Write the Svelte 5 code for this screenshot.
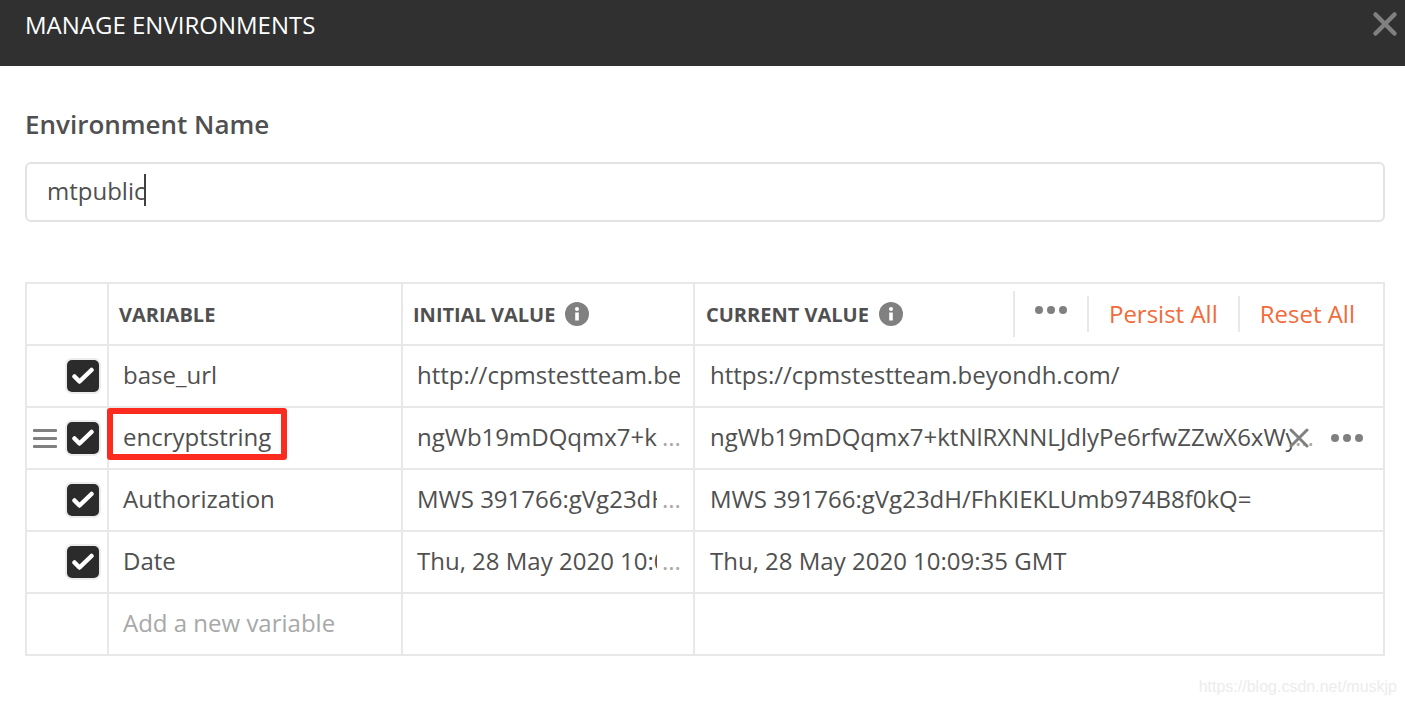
<script lang="ts">
	const rows = [
		{
			name: 'base_url',
			initial: 'http://cpmstestteam.beyondh.com/',
			initialMore: false,
			current: 'https://cpmstestteam.beyondh.com/',
			active: false
		},
		{
			name: 'encryptstring',
			initial: 'ngWb19mDQqmx7+ktNlRXNNLJdlyPe6rfwZZwX6xWy',
			initialMore: true,
			current: 'ngWb19mDQqmx7+ktNlRXNNLJdlyPe6rfwZZwX6xWyJ3kQ0pL',
			active: true
		},
		{
			name: 'Authorization',
			initial: 'MWS 391766:gVg23dH/FhKIEKLUmb974B8f0kQ=',
			initialMore: true,
			current: 'MWS 391766:gVg23dH/FhKIEKLUmb974B8f0kQ=',
			active: false
		},
		{
			name: 'Date',
			initial: 'Thu, 28 May 2020 10:09:35 GMT',
			initialMore: true,
			current: 'Thu, 28 May 2020 10:09:35 GMT',
			active: false
		}
	];
</script>

{#snippet info()}
	<svg class="info" width="24" height="24" viewBox="0 0 24 24">
		<circle cx="12" cy="12" r="12" fill="#808080" />
		<circle cx="12" cy="7" r="2" fill="#fff" />
		<rect x="10.2" y="10.5" width="3.6" height="8" fill="#fff" />
	</svg>
{/snippet}

<div class="page">
	<header>
		<h1>MANAGE ENVIRONMENTS</h1>
		<svg class="close" width="28" height="28" viewBox="0 0 28 28">
			<path d="M4.5 4.5 L23.5 23.5 M23.5 4.5 L4.5 23.5" />
		</svg>
	</header>

	<main>
		<label for="env-name">Environment Name</label>
		<div class="field" id="env-name">
			<span>mtpublic</span><i class="caret"></i>
		</div>

		<div class="table">
			<div class="cell"></div>
			<div class="cell head first">VARIABLE</div>
			<div class="cell head">
				INITIAL VALUE
				{@render info()}
			</div>
			<div class="cell head current">
				CURRENT VALUE
				{@render info()}
				<div class="actions">
					<div class="action dots-action">
						<span class="dots"><b></b><b></b><b></b></span>
					</div>
					<div class="action link">Persist All</div>
					<div class="action link">Reset All</div>
				</div>
			</div>

			{#each rows as row}
				<div class="cell check-cell">
					{#if row.active}
						<span class="handle"><b></b><b></b><b></b></span>
					{/if}
					<span class="check">
						<svg width="22" height="18" viewBox="0 0 22 18">
							<path d="M2.5 9.5 L7.5 14.5 L19.5 3" />
						</svg>
					</span>
				</div>
				<div class="cell value name">
					<span>{row.name}</span>
					{#if row.active}
						<div class="highlight"></div>
					{/if}
				</div>
				<div class="cell value initial">
					<span class="clip">{row.initial}</span>
					{#if row.initialMore}
						<span class="more">...</span>
					{/if}
				</div>
				<div class="cell value current-value">
					<span class="clip" class:short={row.active}>{row.current}</span>
					{#if row.active}
						<span class="more under">...</span>
						<svg class="remove" width="20" height="20" viewBox="0 0 20 20">
							<path d="M2 2 L18 18 M18 2 L2 18" />
						</svg>
						<span class="dots row-dots"><b></b><b></b><b></b></span>
					{/if}
				</div>
			{/each}

			<div class="cell"></div>
			<div class="cell value name placeholder">Add a new variable</div>
			<div class="cell"></div>
			<div class="cell"></div>
		</div>
	</main>

	<div class="watermark">https://blog.csdn.net/muskjp</div>
</div>

<style>
	:global(body) {
		margin: 0;
		background: #fff;
	}

	.page {
		position: relative;
		width: 1405px;
		height: 706px;
		overflow: hidden;
		font-family: 'Open Sans', sans-serif;
		color: #505050;
	}

	header {
		height: 66px;
		background: #303030;
		display: flex;
		align-items: flex-start;
		justify-content: space-between;
		padding: 0 6px 0 25px;
		box-sizing: border-box;
	}

	h1 {
		margin: 7px 0 0;
		font-size: 24px;
		line-height: 36px;
		font-weight: 400;
		color: #fff;
	}

	.close {
		margin-top: 10px;
	}

	.close path {
		fill: none;
		stroke: #808080;
		stroke-width: 4.5;
		stroke-linecap: round;
	}

	main {
		padding: 40px 20px 0 25px;
	}

	label {
		display: block;
		font-size: 26px;
		line-height: 36px;
		font-weight: 600;
		color: #505050;
	}

	.field {
		margin-top: 20px;
		height: 60px;
		box-sizing: border-box;
		border: 2px solid #e3e3e3;
		border-radius: 6px;
		padding: 0 0 4px 20px;
		display: flex;
		align-items: center;
		font-size: 24px;
	}

	.caret {
		width: 2px;
		height: 32px;
		margin-left: -1px;
		background: #404040;
	}

	.table {
		margin-top: 60px;
		width: 1360px;
		box-sizing: border-box;
		border-top: 2px solid #e8e8e8;
		border-left: 2px solid #e8e8e8;
		display: grid;
		grid-template-columns: 82px 294px 292px 690px;
		grid-auto-rows: 62px;
	}

	.cell {
		position: relative;
		box-sizing: border-box;
		border-right: 2px solid #e8e8e8;
		border-bottom: 2px solid #e8e8e8;
		display: flex;
		align-items: center;
		min-width: 0;
	}

	.head {
		padding-left: 10px;
		font-size: 20px;
		font-weight: 700;
		color: #505050;
		white-space: nowrap;
	}

	.current {
		padding-left: 11px;
	}

	.info {
		flex: none;
		margin-left: 10px;
	}

	.actions {
		margin-left: auto;
		display: flex;
		align-items: center;
		height: 100%;
	}

	.action {
		display: flex;
		align-items: center;
		box-sizing: border-box;
		height: 36px;
		border-left: 2px solid #e8e8e8;
	}

	.dots-action {
		height: 46px;
		width: 74px;
		justify-content: center;
	}

	.link {
		padding: 0 20px 2px;
		font-size: 24px;
		font-weight: 400;
		color: #f26b3a;
		white-space: nowrap;
	}

	.link:last-child {
		padding-right: 28px;
	}

	.dots {
		display: flex;
		gap: 4px;
	}

	.dots b {
		width: 8px;
		height: 8px;
		border-radius: 50%;
		background: #808080;
	}

	.dots-action .dots {
		margin-top: -8px;
	}

	.value {
		padding: 0 0 4px 14px;
		font-size: 24px;
		white-space: nowrap;
	}

	.initial {
		padding-right: 13px;
	}

	.current-value {
		padding-left: 15px;
	}

	.clip {
		display: block;
		flex: 1;
		min-width: 0;
		overflow: hidden;
		white-space: nowrap;
	}

	.more {
		flex: none;
		width: 23px;
		padding-left: 5px;
		box-sizing: border-box;
		color: #a8a8a8;
	}

	.check-cell {
		justify-content: flex-end;
		padding-right: 8px;
	}

	.check {
		width: 32px;
		height: 32px;
		border-radius: 5px;
		background: #2b2b2b;
		box-shadow: 0 0 0 2px #ececec;
		display: flex;
		align-items: center;
		justify-content: center;
	}

	.check path {
		fill: none;
		stroke: #fff;
		stroke-width: 4.5;
		stroke-linecap: round;
		stroke-linejoin: round;
	}

	.handle {
		display: flex;
		flex-direction: column;
		gap: 5px;
		margin-right: 10px;
	}

	.handle b {
		width: 24px;
		height: 3px;
		border-radius: 1px;
		background: #808080;
	}

	.highlight {
		position: absolute;
		left: -2px;
		top: 0;
		width: 180px;
		height: 52px;
		box-sizing: border-box;
		border: 6px solid #fb2b1f;
		border-radius: 3px;
	}

	.placeholder {
		color: #a8a8a8;
	}

	.short {
		flex: none;
		width: 582px;
	}

	.under {
		width: 26px;
		padding-left: 3px;
	}

	.remove {
		position: absolute;
		left: 594px;
		top: 20px;
	}

	.remove path {
		fill: none;
		stroke: #808080;
		stroke-width: 3;
		stroke-linecap: round;
	}

	.row-dots {
		position: absolute;
		left: 636px;
		top: 26px;
	}

	.watermark {
		position: absolute;
		right: 8px;
		top: 678px;
		font-family: 'Liberation Sans', sans-serif;
		font-size: 16px;
		color: #ececec;
	}
</style>
